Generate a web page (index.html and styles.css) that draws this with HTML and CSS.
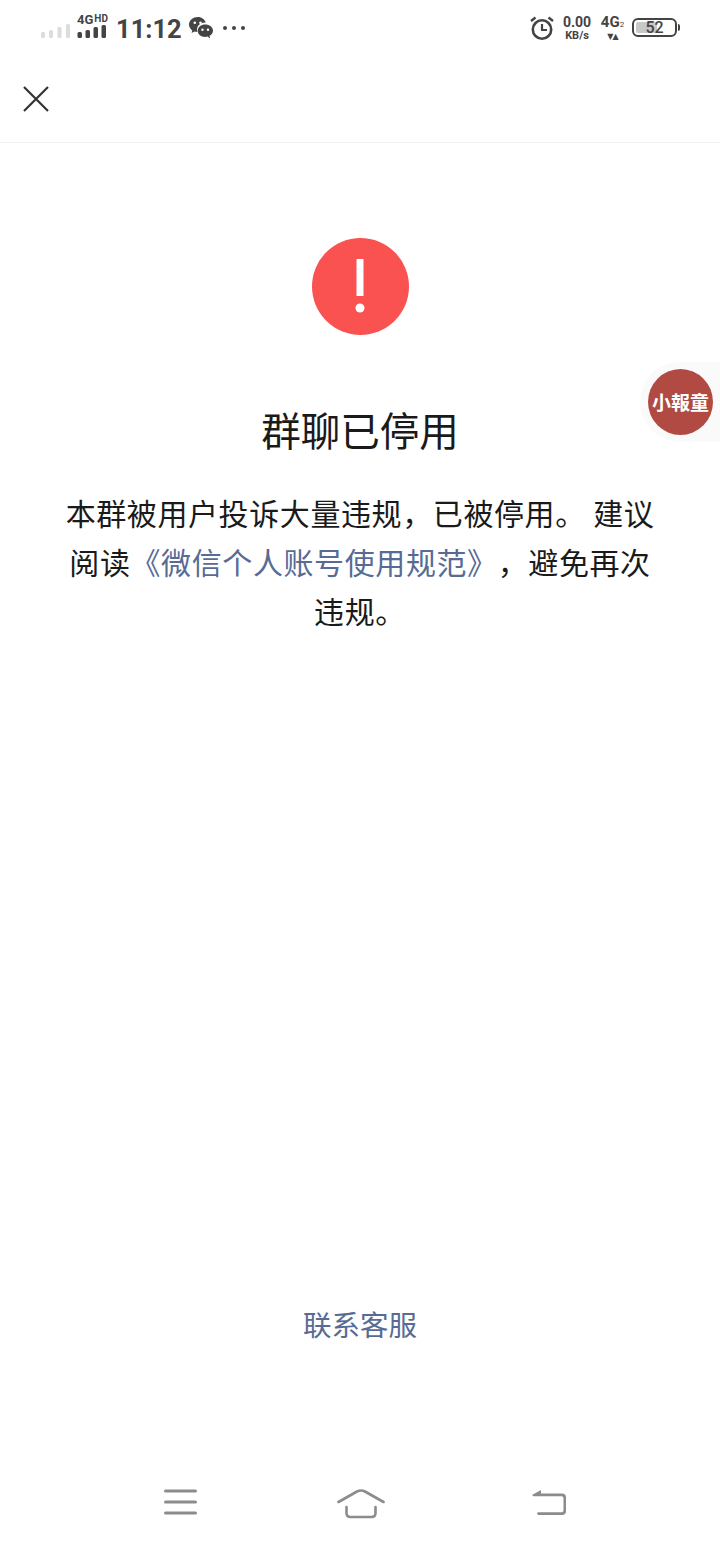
FILE: index.html
```html
<!DOCTYPE html>
<html lang="zh">
<head>
    <meta charset="UTF-8">
    <meta name="viewport" content="width=device-width, initial-scale=1.0">
    <title>群聊已停用</title>
    <link rel="stylesheet" href="styles.css">
</head>
<body>
    <div class="status-bar">
        <div class="status-left">
            <svg class="signal" width="29" height="14" viewBox="0 0 29 14" fill="#dcdcdc">
                <rect x="0" y="8" width="4" height="6" rx="1.5"></rect>
                <rect x="8" y="6" width="4" height="8" rx="1.5"></rect>
                <rect x="16.5" y="3" width="4" height="11" rx="1.5"></rect>
                <rect x="25" y="0" width="4" height="14" rx="1.5"></rect>
            </svg>
            <div class="signal-main">
                <div class="net-label">4G<span class="net-hd">HD</span></div>
                <svg width="29" height="13" viewBox="0 0 29 13" fill="#444">
                    <rect x="0.5" y="7" width="4.500" height="6" rx="1.5"></rect>
                    <rect x="8.500" y="5" width="4.500" height="8" rx="1.5"></rect>
                    <rect x="16.500" y="2" width="4.500" height="11" rx="1.5"></rect>
                    <rect x="24.500" y="0" width="4.500" height="13" rx="1.5"></rect>
                </svg>
            </div>
            <span class="clock">11:12</span>
            <svg class="wechat" width="24" height="23" viewBox="0 0 24 23" fill="#444">
                <path d="M9 0C4 0 0 3.400 0 7.600c0 2.400 1.300 4.500 3.300 5.900L2.600 16l2.900-1.500c.9.300 1.900.4 2.900.5-.3-.8-.4-1.500-.4-2.300 0-4 3.700-7.100 8.100-7.100h.7C15.900 2.500 12.700 0 9 0z"></path>
                <circle cx="5.800" cy="5.800" r="1.300" fill="#fff"></circle>
                <circle cx="11.500" cy="5.800" r="1.300" fill="#fff"></circle>
                <path d="M16.200 7.500c-4.200 0-7.500 2.700-7.500 6.200s3.300 6.200 7.500 6.200c.8 0 1.600-.1 2.300-.3l2.600 1.900-.6-2.700c2.100-1.100 3.500-3 3.500-5.100 0-3.500-3.500-6.200-7.800-6.200z"></path>
                <circle cx="13.500" cy="12.800" r="1.200" fill="#fff"></circle>
                <circle cx="19" cy="12.800" r="1.200" fill="#fff"></circle>
            </svg>
            <div class="more-dots">
                <span></span><span></span><span></span>
            </div>
        </div>
        <div class="status-right">
            <svg class="alarm" width="24" height="24" viewBox="0 0 24 24" fill="none" stroke="#444">
                <circle cx="12" cy="13.500" r="9.200" stroke-width="2.600"></circle>
                <path d="M12 8v6h5" stroke-width="2.200"></path>
                <path d="M1 5l4.500-3.500M23 5l-4.500-3.500" stroke-width="2.400"></path>
            </svg>
            <div class="speed">
                <div class="speed-value">0.00</div>
                <div class="speed-unit">KB/s</div>
            </div>
            <div class="net-right">
                <div class="net-right-label">4G<span class="net-sim">2</span></div>
                <div class="net-arrows">▼▲</div>
            </div>
            <div class="battery">
                <div class="battery-body">
                    <div class="battery-fill"></div>
                    <span class="battery-text">52</span>
                </div>
                <div class="battery-tip"></div>
            </div>
        </div>
    </div>

    <div class="top-nav">
        <svg width="26" height="26" viewBox="0 0 26 26" fill="none" stroke="#333" stroke-width="2.200">
            <path d="M1 1l24 24M25 1L1 25"></path>
        </svg>
    </div>

    <div class="content">
        <div class="warn-icon">
            <svg width="14" height="72" viewBox="0 0 14 72" fill="#fff">
                <rect x="3.500" y="8" width="7" height="37"></rect>
                <circle cx="7" cy="57" r="4.500"></circle>
            </svg>
        </div>
        <h1 class="title">群聊已停用</h1>
        <p class="desc">本群被用户投诉大量违规，已被停用。 建议<br>阅读<a class="link" href="#">《微信个人账号使用规范》</a>，避免再次<br>违规。</p>
        <a class="service" href="#">联系客服</a>
    </div>

    <div class="nav-bar">
        <svg width="33" height="26" viewBox="0 0 33 26" fill="none" stroke="#8c8c8c" stroke-width="3" stroke-linecap="round">
            <path d="M1.500 2h30M1.500 13h30M1.500 24h30"></path>
        </svg>
        <svg class="nav-home" width="48" height="30" viewBox="0 0 48 30" fill="none" stroke="#8c8c8c" stroke-width="2.600" stroke-linecap="round" stroke-linejoin="round">
            <path d="M1.500 13L20 2.500q4-2 8 0L46.500 13"></path>
            <path d="M9.500 18v6q0 4 4 4h21q4 0 4-4v-6"></path>
        </svg>
        <svg class="nav-back" width="36" height="28" viewBox="0 0 36 28" fill="#8c8c8c" stroke="none">
            <path d="M1 6l9-5v3.500h21q4 0 4 4V22q0 4-4 4H7.500a1.400 1.400 0 0 1 0-2.800H30.500q2 0 2-2V9.300q0-2-2-2H2.500z"></path>
        </svg>
    </div>

    <div class="float-ball">
        <div class="float-circle">小報童</div>
    </div>
</body>
</html>
```

FILE: styles.css
```css
body {
    margin: 0;
    padding: 0;
    height: 1544px;
    display: flex;
    flex-direction: column;
    overflow: hidden;
    background-color: #ffffff;
    color: #1a1a1a;
    font-family: "Noto Sans CJK SC", "Liberation Sans", sans-serif;
}

.status-bar {
    height: 56px;
    padding: 0 40px 0 41px;
    display: flex;
    justify-content: space-between;
    align-items: flex-start;
    color: #444444;
    font-family: Roboto, "Liberation Sans", sans-serif;
}

.status-left,
.status-right {
    display: flex;
    align-items: flex-start;
}

.signal {
    margin-top: 24px;
    margin-right: 7px;
}

.signal-main {
    width: 29px;
    margin-top: 13px;
    margin-right: 10px;
}

.signal-main svg {
    display: block;
}

.net-label {
    height: 12px;
    font-size: 13px;
    line-height: 12px;
    font-weight: 700;
    white-space: nowrap;
}

.net-hd {
    font-size: 10px;
    margin-left: 1px;
    vertical-align: 2px;
}

.clock {
    margin-top: 13px;
    font-size: 25.500px;
    line-height: 32px;
    font-weight: 700;
}

.wechat {
    margin-top: 17px;
    margin-left: 7px;
}

.more-dots {
    display: flex;
    gap: 5px;
    margin-top: 26px;
    margin-left: 10px;
}

.more-dots span {
    width: 4px;
    height: 4px;
    border-radius: 50%;
    background-color: #444444;
}

.alarm {
    margin-top: 16px;
}

.speed {
    width: 30px;
    margin-top: 15px;
    margin-left: 8px;
    text-align: center;
    font-weight: 700;
}

.speed-value {
    font-size: 14px;
    line-height: 15px;
}

.speed-unit {
    font-size: 11px;
    line-height: 11px;
}

.net-right {
    width: 25px;
    margin-top: 14px;
    margin-left: 8px;
    text-align: center;
    font-weight: 700;
}

.net-right-label {
    font-size: 15px;
    line-height: 17px;
    white-space: nowrap;
}

.net-sim {
    font-size: 8px;
    font-weight: 400;
}

.net-arrows {
    font-size: 8px;
    line-height: 8px;
    letter-spacing: -1px;
    font-family: "DejaVu Sans", sans-serif;
}

.battery {
    display: flex;
    align-items: center;
    margin-top: 18px;
    margin-left: 7px;
}

.battery-body {
    position: relative;
    width: 41px;
    height: 15px;
    border: 2px solid #444444;
    border-radius: 6px;
    overflow: hidden;
    text-align: center;
}

.battery-fill {
    position: absolute;
    left: 2px;
    top: 2px;
    bottom: 2px;
    width: 52%;
    background-color: #c8c8c8;
    border-radius: 2px;
}

.battery-text {
    position: relative;
    font-size: 16px;
    line-height: 15px;
    font-weight: 500;
    display: block;
}

.battery-tip {
    width: 2px;
    height: 7px;
    margin-left: 1px;
    background-color: #444444;
    border-radius: 0 2px 2px 0;
}

.top-nav {
    height: 86px;
    padding-left: 23px;
    display: flex;
    align-items: center;
    border-bottom: 1px solid #f3f3f3;
}

.content {
    flex: 1;
    display: flex;
    flex-direction: column;
    align-items: center;
    padding: 95px 60px 0;
    text-align: center;
}

.warn-icon {
    width: 97px;
    height: 97px;
    border-radius: 50%;
    background-color: #fa5151;
    display: flex;
    justify-content: center;
    align-items: center;
    flex-shrink: 0;
}

.title {
    margin: 66px 0 0;
    font-size: 39.500px;
    line-height: 56px;
    font-weight: 400;
}

.desc {
    margin: 31px 0 0;
    font-size: 30px;
    line-height: 49px;
    letter-spacing: 0.6px;
    text-spacing-trim: space-all;
    white-space: nowrap;
}

.link {
    color: #576b95;
    text-decoration: none;
}

.service {
    margin-top: auto;
    margin-bottom: 145px;
    font-size: 28.500px;
    line-height: 40px;
    color: #576b95;
    text-decoration: none;
}

.nav-bar {
    height: 55px;
    padding-left: 164px;
    display: flex;
    align-items: flex-start;
}

.nav-home {
    margin-left: 140px;
}

.nav-back {
    margin-left: 146px;
}

.float-ball {
    position: absolute;
    right: 0;
    top: 362px;
    width: 80px;
    height: 80px;
    box-sizing: border-box;
    padding: 7px 7px 0 8px;
    border-radius: 40px 0 0 40px;
    background-color: #fafafa;
}

.float-circle {
    width: 65px;
    height: 66px;
    border-radius: 50%;
    background-color: #b04a42;
    color: #ffffff;
    font-size: 19px;
    line-height: 66px;
    font-weight: 700;
    text-align: center;
    white-space: nowrap;
}
```
